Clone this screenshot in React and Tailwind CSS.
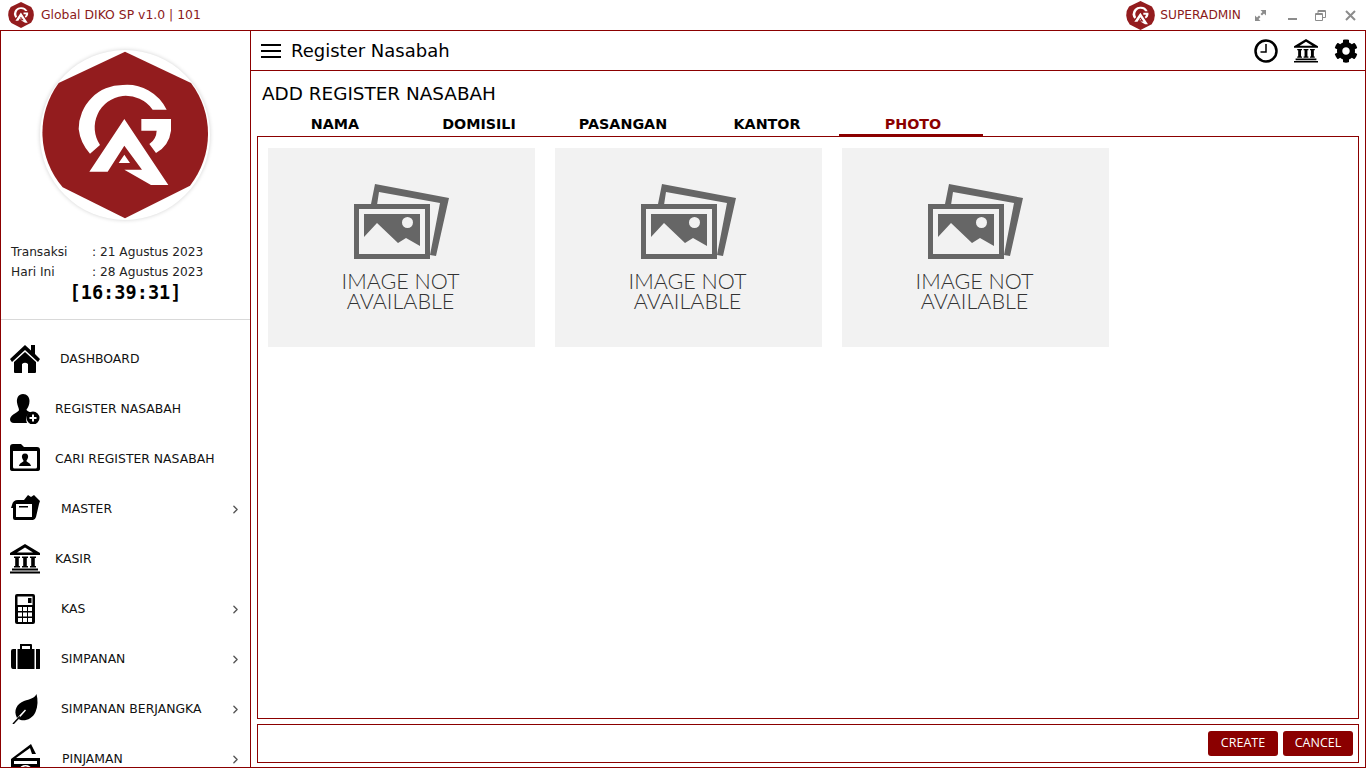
import { FaCog } from "react-icons/fa";
import { ChevronRight } from "lucide-react";

const Logo = ({ className }) => (
  <svg viewBox="125 156 504 504" className={className}>
    <path d="M377 158L575 252A252 252 0 0 1 572 560L377 658L190 565A252 252 0 0 1 178 252Z" fill="#931c1e" />
    <path fill="#fff" d="M502 332H460A100 100 0 0 0 370 291A95 95 0 0 0 302 438L272 464A132 132 0 0 1 238 390A132 132 0 0 1 370 258A132 132 0 0 1 502 332Z" />
    <path fill="#fff" d="M426 360H515V395A90 90 0 0 1 470 462L450 435A50 50 0 0 0 472 395H426Z" />
    <path fill="#fff" fillRule="evenodd" d="M375 360L507 558H455L375 512H428L375 440L325 518H270ZM375 467L392 492H358Z" />
  </svg>
);

const HomeIcon = () => (
  <svg viewBox="0 0 30 30" className="w-[30px] h-[30px]">
    <path d="M0 15L15 1L21 6.500V1H25V10L30 15L28 18L15 6L2 18Z" />
    <path fillRule="evenodd" d="M4 18L15 8L26 18V28Q26 29 25 29H5Q4 29 4 28ZM12 20V29H18V20Q15 17.500 12 20Z" />
  </svg>
);

const UserPlusIcon = () => (
  <svg viewBox="0 0 30 30" className="w-[30px] h-[30px]">
    <path d="M13 0C8.500 0 6.500 4 7 8.500C7.400 12 9 14 9 16C9 18 1 20 0 25Q0 29 4 29H17C15 24 17 20 21 18.500C18 17.500 16.500 16.500 16.500 15.500C18 13.500 19.500 11 19.500 7C19.500 3 17 0 13 0Z" />
    <path fillRule="evenodd" d="M23 17.500A6.500 6.500 0 1 0 23.010 30.500A6.500 6.500 0 1 0 23 17.500ZM22 20.500H24V23H26.500V25H24V27.500H22V25H19.500V23H22Z" />
  </svg>
);

const FolderUserIcon = () => (
  <svg viewBox="0 0 30 30" className="w-[30px] h-[30px]">
    <path fillRule="evenodd" d="M0 3Q0 0 3 0H11L14 3H27Q30 3 30 6V25Q30 27 27 27H3Q0 27 0 25ZM3 7V23Q3 24.500 4.500 24.500H25.500Q27 24.500 27 23V7Z" />
    <path d="M15 9.500C12.500 9.500 11.500 11.500 12 13.500C12.500 15.500 13.500 16 13.500 17C13.500 18 9.500 19 9 22H21C20.500 19 16.500 18 16.500 17C16.500 16 17.500 15.500 18 13.500C18.500 11.500 17.500 9.500 15 9.500Z" />
  </svg>
);

const BoxIcon = () => (
  <svg viewBox="0 0 30 30" className="w-[30px] h-[30px]">
    <path fillRule="evenodd" d="M2 11Q3 6 8 6H14L18 1L21 3L24 1L30 7L29 10L26 23Q25 26 23 26H5Q3 26 3 24V14H1ZM6 10V23H22V10Z" />
    <path d="M9 12H18V13.500H9Z" />
  </svg>
);

const BankIcon = ({ className }) => (
  <svg viewBox="0 0 30 30" className={className}>
    <path fillRule="evenodd" d="M15 0L30 9V11H0V9ZM15 3.500L7 8.500H23Z" />
    <path d="M4 12.500H10V14H8.800V22H10V23.500H4V22H5.200V14H4ZM12 12.500H18V14H16.800V22H18V23.500H12V22H13.200V14H12ZM20 12.500H26V14H24.800V22H26V23.500H20V22H21.200V14H20ZM2 24.500H28V26.500H2ZM0 27.500H30V29.500H0Z" />
  </svg>
);

const CalcIcon = () => (
  <svg viewBox="0 0 30 30" className="w-[30px] h-[30px]">
    <path fillRule="evenodd" d="M7 0H23Q25 0 25 2V28Q25 30 23 30H7Q5 30 5 28V2Q5 0 7 0ZM7.500 2.500V11H22.500V2.500ZM18 4H21.500V9H18ZM8 13V17H12V13ZM13 13V17H17V13ZM18 13V17H22V13ZM8 18.500V22.500H12V18.500ZM13 18.500V22.500H17V18.500ZM18 18.500V22.500H22V18.500ZM8 24V28H12V24ZM13 24V28H17V24ZM18 24V28H22V24Z" />
  </svg>
);

const CaseIcon = () => (
  <svg viewBox="0 0 30 30" className="w-[30px] h-[30px]">
    <path fillRule="evenodd" d="M10 0H21Q22 0 22 1V5H29Q31 5 31 7V22Q31 25 29 25H3Q1 25 1 22V7Q1 5 3 5H10V1Q10 0 10 0ZM12 2V5H20V2Z" />
    <path d="M6 4.500H7.500V25.500H6ZM24.500 4.500H26V25.500H24.500Z" fill="#fff" />
  </svg>
);

const LeafIcon = () => (
  <svg viewBox="0 0 30 30" className="w-[30px] h-[30px]">
    <path d="M26.500 0C25 4 20 5 14 7C7 10 3 16 7 24L15 15.500L16 16.500L8.500 25C13 28 22 26 25.500 18C28 12 28 6 26.500 0Z" />
    <path d="M3 30L10 22.500" stroke="#000" strokeWidth="1.500" fill="none" />
  </svg>
);

const MoneyIcon = () => (
  <svg viewBox="0 0 30 30" className="w-[30px] h-[30px]">
    <path fillRule="evenodd" d="M1 15L21 0L26 10H22L20 4L6 14H30V30H1ZM4 17V20H27V17Z" />
    <ellipse cx="15.500" cy="25" rx="6" ry="4" fill="#fff" />
    <ellipse cx="15.500" cy="25" rx="3" ry="2.500" />
  </svg>
);

const menu = [
  { label: "DASHBOARD", Icon: HomeIcon, pad: "ml-[20px]" },
  { label: "REGISTER NASABAH", Icon: UserPlusIcon, pad: "ml-[15px]" },
  { label: "CARI REGISTER NASABAH", Icon: FolderUserIcon, pad: "ml-[15px]" },
  { label: "MASTER", Icon: BoxIcon, pad: "ml-[21px]", sub: true },
  { label: "KASIR", Icon: () => <BankIcon className="w-[30px] h-[30px]" />, pad: "ml-[15px]" },
  { label: "KAS", Icon: CalcIcon, pad: "ml-[21px]", sub: true },
  { label: "SIMPANAN", Icon: CaseIcon, pad: "ml-[21px]", sub: true },
  { label: "SIMPANAN BERJANGKA", Icon: LeafIcon, pad: "ml-[21px]", sub: true },
  { label: "PINJAMAN", Icon: MoneyIcon, pad: "ml-[22px]", sub: true },
];

const tabs = ["NAMA", "DOMISILI", "PASANGAN", "KANTOR", "PHOTO"];

const NoImage = () => (
  <div className="w-[267px] h-[199px] bg-[#f2f2f2] flex flex-col items-center pt-[36px]">
    <svg viewBox="0 0 96 78" className="w-[96px] h-[78px]" fill="#666666">
      <path fillRule="evenodd" d="M21 0L95 14L82 72L76 71L86 19L25 8L23 21L17 20Z" />
      <path fillRule="evenodd" d="M0 20H76V75H0ZM5 25V70H71V25Z" />
      <path d="M10 30H66V62L52 54L44 59L23 39L10 53Z" />
      <circle cx="53.500" cy="38.500" r="5.500" fill="#f2f2f2" />
    </svg>
    <div className="font-['Lato',sans-serif] font-light text-[21.5px] leading-[20px] text-[#333] text-center mt-[9px] ml-[-2px]">
      IMAGE NOT
      <br />
      AVAILABLE
    </div>
  </div>
);

export default function App() {
  return (
    <div className="w-[1366px] h-[768px] overflow-hidden bg-white font-['DejaVu_Sans',sans-serif] text-[#111] flex flex-col">
      <div className="h-[30px] flex items-center shrink-0">
        <Logo className="w-[26px] h-[26px] ml-[8px]" />
        <span className="ml-[7px] text-[12.4px] text-[#8b1a1a]">Global DIKO SP v1.0 | 101</span>
        <Logo className="w-[29px] h-[29px] ml-auto" />
        <span className="ml-[5px] text-[12.2px] text-[#8b1a1a]">SUPERADMIN</span>
        <div className="flex items-center text-[#8c8c8c] ml-[14px] mr-[10px]">
          <svg viewBox="0 0 11 11" className="w-[11px] h-[11px]" fill="currentColor">
            <path d="M5.500 0H11V5.500L9 3.500L7 5.500L5.500 4L7.500 2ZM0 5.500L2 7.500L4 5.500L5.500 7L3.500 9L5.500 11H0Z" />
          </svg>
          <svg viewBox="0 0 10 11" className="w-[10px] h-[11px] ml-[21px]" fill="currentColor">
            <path d="M1 8H10V10H1Z" />
          </svg>
          <svg viewBox="0 0 11 11" className="w-[11px] h-[11px] ml-[18px]" fill="none" stroke="currentColor">
            <path d="M.5 3.500H7.500V10.500H.5ZM.5 4.500H7.500M3 3V.5H10.500V7.500H8M3 1.500H10.500" />
          </svg>
          <svg viewBox="0 0 11 11" className="w-[11px] h-[11px] ml-[19px]" fill="none" stroke="currentColor" strokeWidth="2">
            <path d="M1 1L10 10M10 1L1 10" />
          </svg>
        </div>
      </div>

      <div className="flex-1 flex min-h-0 border-t border-b border-[#8b0000]">
        <aside className="w-[251px] shrink-0 border-l border-r border-[#8b0000] overflow-hidden flex flex-col">
          <div className="h-[289px] shrink-0 border-b border-[#d9d9d9]">
            <div className="flex justify-center pt-[19px] pr-[2px]">
              <div className="rounded-full shadow-[0_0_4px_rgba(0,0,0,0.18)] w-[170px] h-[170px] flex items-center justify-center">
                <Logo className="w-[168px] h-[168px]" />
              </div>
            </div>
            <div className="pl-[10px] mt-[22px] text-[12.2px] leading-[20px] text-[#222]">
              <div className="flex"><span className="w-[81px]">Transaksi</span><span>: 21 Agustus 2023</span></div>
              <div className="flex"><span className="w-[81px]">Hari Ini</span><span>: 28 Agustus 2023</span></div>
            </div>
            <div className="text-center font-bold text-[18.6px] leading-[22px] font-['DejaVu_Sans_Mono',monospace] text-black">[16:39:31]</div>
          </div>
          <nav className="pt-[14px]">
            {menu.map(({ label, Icon, pad, sub }) => (
              <div key={label} className="h-[50px] flex items-center pl-[9px] pr-[8px] text-[12.4px] text-[#111]">
                <Icon />
                <span className={pad}>{label}</span>
                {sub && <ChevronRight className="ml-auto w-[13px] h-[13px] text-[#555]" strokeWidth={2.5} />}
              </div>
            ))}
          </nav>
        </aside>

        <main className="flex-1 min-w-0 flex flex-col border-r border-[#8b0000]">
          <header className="h-[40px] shrink-0 border-b border-[#8b0000] flex items-center pl-[10px] pr-[7px]">
            <svg viewBox="0 0 20 14" className="w-[20px] h-[14px]" stroke="#000" strokeWidth="2">
              <path d="M0 1H20M0 7H20M0 13H20" />
            </svg>
            <span className="ml-[10px] text-[18px] text-black">Register Nasabah</span>
            <svg viewBox="0 0 24 24" className="w-[24px] h-[24px] ml-auto" fill="none" stroke="#000">
              <circle cx="12" cy="12" r="10.500" strokeWidth="2.500" />
              <path d="M12 5V13H6.500" strokeWidth="1.500" />
            </svg>
            <BankIcon className="w-[24px] h-[24px] ml-[16px]" />
            <FaCog className="w-[24px] h-[24px] ml-[16px] text-black" />
          </header>

          <div className="flex-1 min-h-0 flex flex-col pl-[6px] pr-[6px] pb-[4px]">
            <h1 className="text-[18.4px] font-normal text-black pl-[5px] pt-[10px] leading-[26px]">ADD REGISTER NASABAH</h1>
            <div className="flex pl-[6px] h-[28px] mt-[1px] shrink-0">
              {tabs.map((t) => (
                <div
                  key={t}
                  className={`w-[144px] text-center text-[14.3px] font-bold pt-[7px] leading-[18px] ${t === "PHOTO" ? "text-[#8b0000] border-b-2 border-[#8b0000] pl-[4px]" : "text-black"}`}
                >
                  {t}
                </div>
              ))}
            </div>
            <div className="flex-1 min-h-0 border border-[#8b0000] flex gap-[20px] pl-[10px] pt-[11px]">
              <NoImage />
              <NoImage />
              <NoImage />
            </div>
            <div className="h-[39px] shrink-0 mt-[5px] border border-[#8b0000] flex items-center justify-end gap-[5px] pr-[5px]">
              <button className="h-[25px] w-[70px] rounded-[3px] bg-[#8b0000] text-white text-[12.5px] font-['Open_Sans',sans-serif]">CREATE</button>
              <button className="h-[25px] w-[70px] rounded-[3px] bg-[#8b0000] text-white text-[12.5px] font-['Open_Sans',sans-serif]">CANCEL</button>
            </div>
          </div>
        </main>
      </div>
    </div>
  );
}
